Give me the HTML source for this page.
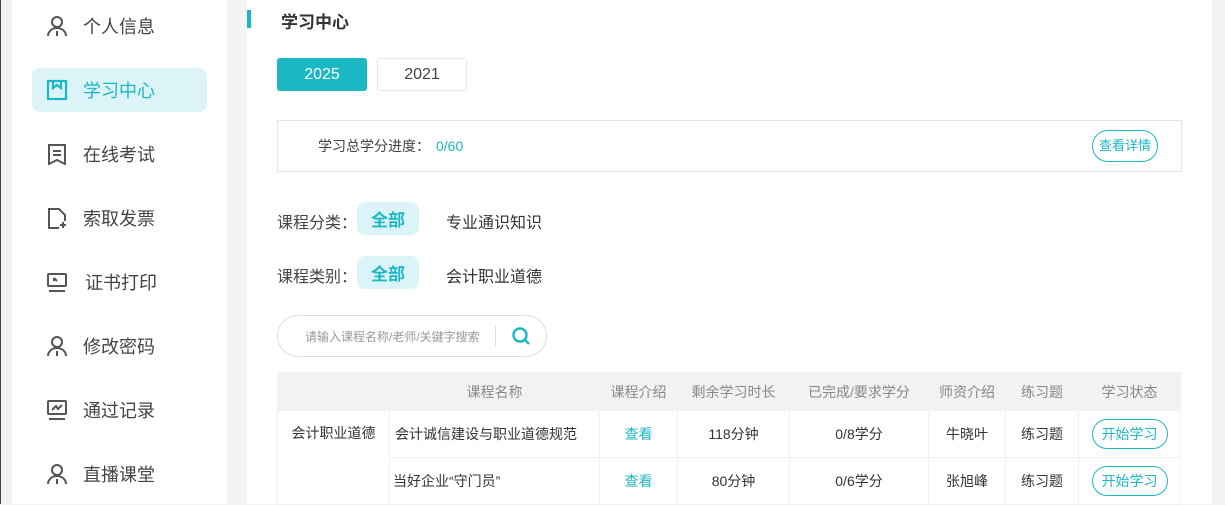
<!DOCTYPE html>
<html><head><meta charset="utf-8"><style>
*{margin:0;padding:0;box-sizing:border-box}
body{width:1225px;height:504px;overflow:hidden;background:#f3f3f3;font-family:"Liberation Sans","Noto Sans CJK SC",sans-serif;position:relative;color:#333}
.abs{position:absolute}
.side{left:12px;top:0;width:215px;height:504px;background:#fff}
.item{position:absolute;left:32px;width:175px;height:44px;display:flex;align-items:center;font-size:18px;color:#444}
.item svg{position:absolute;left:14px;width:22px;height:22px}
.item span{position:absolute;left:51px}
.item.act{background:#dcf3f8;border-radius:8px;color:#1bb8c4}
.main{left:247px;top:0;width:965px;height:504px;background:#fff}
.btn{height:33px;font-size:16px;display:flex;align-items:center;justify-content:center;border-radius:3px}
.tag{background:#dcf3f8;color:#1bb8c4;border-radius:8px;width:62px;height:33px;display:flex;align-items:center;justify-content:center;font-size:17px;font-weight:600}
table{position:absolute;left:277px;top:372px;width:904px;border-collapse:collapse;font-size:14px;color:#333}
td,th{border:1px solid #f0f0f0;text-align:center;font-weight:normal}
th{background:#f2f2f2;color:#888;height:38px;border-color:#f2f2f2}
td{height:47px}
.sb{display:inline-block;border:1px solid #1bb8c4;color:#1bb8c4;border-radius:16px;padding:0 9px;height:30px;line-height:28px;font-size:14px}
.link{color:#1bb8c4}
</style></head><body>
<div class="abs" style="left:0;top:0;width:1px;height:504px;background:#444"></div>
<div class="abs side"></div>
<div class="item" style="top:4px"><svg viewBox="0 0 22 22" fill="none" stroke="#555" stroke-width="2"><circle cx="11" cy="7" r="5"/><path d="M2 21a9 8 0 0 1 18 0M11 16v5"/></svg><span>个人信息</span></div>
<div class="item act" style="top:68px"><svg viewBox="0 0 22 22" fill="none" stroke="#1bb8c4" stroke-width="2.2"><rect x="2" y="2" width="18" height="18"/><path d="M7 2v7l4-3 4 3V2"/></svg><span>学习中心</span></div>
<div class="item" style="top:132px"><svg viewBox="0 0 22 22" fill="none" stroke="#555" stroke-width="2"><path d="M3 2h16v19l-8-4-8 4z"/><path d="M7 8h8M7 12h8"/></svg><span>在线考试</span></div>
<div class="item" style="top:196px"><svg viewBox="0 0 22 22" fill="none" stroke="#555" stroke-width="2"><path d="M13 21H3V2h10l6 6v6"/><path d="M17 15v6M14 18h6"/></svg><span>索取发票</span></div>
<div class="item" style="top:260px"><svg viewBox="0 0 22 22" fill="none" stroke="#555" stroke-width="2"><rect x="2" y="3" width="18" height="12" rx="1"/><path d="M3 20h16M8 7l3 3M8 7v3"/></svg><span style="left:53px">证书打印</span></div>
<div class="item" style="top:324px"><svg viewBox="0 0 22 22" fill="none" stroke="#555" stroke-width="2"><circle cx="11" cy="7" r="5"/><path d="M2 21a9 8 0 0 1 18 0M11 16v5"/></svg><span>修改密码</span></div>
<div class="item" style="top:388px"><svg viewBox="0 0 22 22" fill="none" stroke="#555" stroke-width="2"><rect x="2" y="2" width="18" height="13" rx="1"/><path d="M3 20h16M6 11l4-4 2 3 4-4"/></svg><span>通过记录</span></div>
<div class="item" style="top:452px"><svg viewBox="0 0 22 22" fill="none" stroke="#555" stroke-width="2"><circle cx="11" cy="7" r="5"/><path d="M2 21a9 8 0 0 1 18 0M11 16v5"/></svg><span>直播课堂</span></div>

<div class="abs main"></div>
<div class="abs" style="left:247px;top:10px;width:4px;height:18px;background:#1bb8c4"></div>
<div class="abs" style="left:281px;top:8px;font-size:17px;font-weight:bold;color:#333">学习中心</div>
<div class="abs btn" style="left:277px;top:58px;width:90px;background:#1bb8c4;color:#fff">2025</div>
<div class="abs btn" style="left:377px;top:58px;width:90px;border:1px solid #e5e5e5;color:#444">2021</div>
<div class="abs" style="left:277px;top:120px;width:905px;height:52px;border:1px solid #e5e5e5"></div>
<div class="abs" style="left:318px;top:136px;font-size:14px;color:#444">学习总学分进度：<span style="color:#1bb8c4;margin-left:6px">0/60</span></div>
<div class="abs sb" style="left:1092px;top:130px;height:32px;line-height:30px;font-size:13px;padding:0 6px">查看详情</div>
<div class="abs" style="left:277px;top:209px;font-size:16px;color:#444">课程分类：</div>
<div class="abs tag" style="left:357px;top:202px">全部</div>
<div class="abs" style="left:446px;top:209px;font-size:16px;color:#333">专业通识知识</div>
<div class="abs" style="left:277px;top:263px;font-size:16px;color:#444">课程类别：</div>
<div class="abs tag" style="left:357px;top:256px">全部</div>
<div class="abs" style="left:446px;top:263px;font-size:16px;color:#333">会计职业道德</div>
<div class="abs" style="left:277px;top:315px;width:270px;height:42px;border:1px solid #ddd;border-radius:21px"></div>
<div class="abs" style="left:305px;top:328px;font-size:12px;color:#999">请输入课程名称/老师/关键字搜索</div>
<div class="abs" style="left:495px;top:326px;width:1px;height:20px;background:#ddd"></div>
<svg class="abs" style="left:511px;top:326px" width="20" height="20" viewBox="0 0 20 20" fill="none" stroke="#1bb8c4" stroke-width="2.4"><circle cx="9" cy="9" r="6.5"/><path d="M14 14l4 4"/></svg>

<table>
<tr><th style="width:112px"></th><th style="width:210px">课程名称</th><th style="width:78px">课程介绍</th><th style="width:112px">剩余学习时长</th><th style="width:139px">已完成/要求学分</th><th style="width:77px">师资介绍</th><th style="width:73px">练习题</th><th>学习状态</th></tr>
<tr><td rowspan="2" style="vertical-align:top;padding-top:12px">会计职业道德</td><td style="text-align:left;padding-left:5px">会计诚信建设与职业道德规范</td><td class="link">查看</td><td>118分钟</td><td>0/8学分</td><td>牛晓叶</td><td>练习题</td><td><span class="sb">开始学习</span></td></tr>
<tr><td style="text-align:left;padding-left:3px">当好企业“守门员”</td><td class="link">查看</td><td>80分钟</td><td>0/6学分</td><td>张旭峰</td><td>练习题</td><td><span class="sb">开始学习</span></td></tr>
</table>
</body></html>
